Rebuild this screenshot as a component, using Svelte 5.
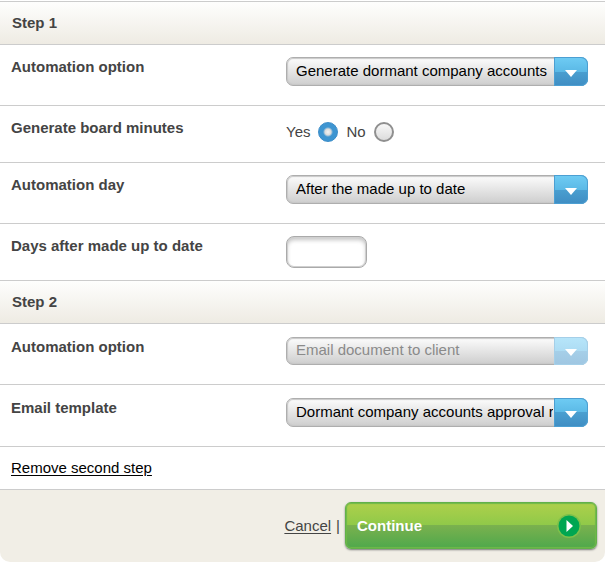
<script>
  let firstOption = $state('Generate dormant company accounts');
  let minutes = $state('yes');
  let day = $state('After the made up to date');
  let days = $state('');
  let secondOption = $state('Email document to client');
  let template = $state('Dormant company accounts approval required');
  let hasSecondStep = $state(true);
</script>

{#snippet arrow()}
  <span class="arrow" aria-hidden="true">
    <svg width="12" height="8" viewBox="0 0 12 8">
      <path d="M0 1h12L6 8z" fill="#fff" />
    </svg>
  </span>
{/snippet}

<form onsubmit={(e) => e.preventDefault()}>
  <section>
    <h2>Step 1</h2>
    <div class="row">
      <label class="name" for="option-1">Automation option</label>
      <div class="select">
        <select id="option-1" bind:value={firstOption}>
          <option>Generate dormant company accounts</option>
          <option>Email document to client</option>
        </select>
        {@render arrow()}
      </div>
    </div>
    <div class="row compact" role="radiogroup" aria-labelledby="minutes-name">
      <span class="name" id="minutes-name">Generate board minutes</span>
      <div class="radios">
        <label>Yes <input type="radio" name="minutes" value="yes" bind:group={minutes} /></label>
        <label>No <input type="radio" name="minutes" value="no" bind:group={minutes} /></label>
      </div>
    </div>
    <div class="row">
      <label class="name" for="day">Automation day</label>
      <div class="select">
        <select id="day" bind:value={day}>
          <option>After the made up to date</option>
          <option>On the made up to date</option>
        </select>
        {@render arrow()}
      </div>
    </div>
    <div class="row compact">
      <label class="name" for="days">Days after made up to date</label>
      <input id="days" class="number" type="text" inputmode="numeric" bind:value={days} />
    </div>
  </section>

  {#if hasSecondStep}
    <section class="second">
      <h2>Step 2</h2>
      <div class="row">
        <label class="name" for="option-2">Automation option</label>
        <div class="select">
          <select id="option-2" bind:value={secondOption} disabled>
            <option>Email document to client</option>
          </select>
          {@render arrow()}
        </div>
      </div>
      <div class="row tall">
        <label class="name" for="template">Email template</label>
        <div class="select">
          <select id="template" bind:value={template}>
            <option>Dormant company accounts approval required</option>
          </select>
          {@render arrow()}
        </div>
      </div>
      <div class="remove">
        <a href="#remove" onclick={() => (hasSecondStep = false)}>Remove second step</a>
      </div>
    </section>
  {/if}

  <footer>
    <a href="#cancel">Cancel</a>
    <span class="bar">|</span>
    <button type="submit">
      Continue
      <svg width="24" height="24" viewBox="0 0 24 24" aria-hidden="true">
        <circle cx="12" cy="12" r="12" fill="#7cc04b" />
        <circle cx="12" cy="12" r="10.5" fill="#00a651" />
        <path d="M9.500 6v12l6.500-6z" fill="#fff" />
      </svg>
    </button>
  </footer>
</form>

<style>
  :global(body) {
    margin: 0;
    background: #fff;
  }

  form {
    padding-top: 1px;
    font: 15px/18px Arial, "Liberation Sans", sans-serif;
    color: #444;
  }

  section:first-child {
    border-top: 1px solid #ccc;
  }

  h2 {
    margin: 0;
    padding: 12px;
    border-bottom: 1px solid #ccc;
    background: linear-gradient(#fefefd, #eeebe3);
    font-size: 15px;
    line-height: 18px;
  }

  .row {
    display: grid;
    grid-template-columns: 275px minmax(0, 1fr);
    align-items: start;
    box-sizing: border-box;
    min-height: 61px;
    padding: 12px 17px 12px 11px;
    border-bottom: 1px solid #ccc;
  }

  .compact {
    min-height: 57px;
  }

  .tall {
    min-height: 62px;
  }

  .second .row {
    padding-top: 13px;
  }

  .name {
    padding-top: 1px;
    font-weight: bold;
  }

  .select {
    position: relative;
    max-width: 302px;
  }

  select {
    display: block;
    appearance: none;
    box-sizing: border-box;
    width: 100%;
    height: 29px;
    margin: 0;
    padding: 0 34px 2px 9px;
    border: 1px solid #aeaeae;
    border-radius: 7px;
    outline-offset: 2px;
    background: linear-gradient(#fcfcfc, #cecece);
    box-shadow: inset 0 0 1px 1px #c8c8c8;
    font: inherit;
    color: #000;
    opacity: 1;
  }

  select:disabled {
    height: 28px;
    color: #8a8a8a;
  }

  .arrow {
    position: absolute;
    top: 0;
    right: 0;
    bottom: 0;
    display: flex;
    align-items: center;
    justify-content: center;
    box-sizing: border-box;
    width: 34px;
    padding-top: 2px;
    border-radius: 0 7px 7px 0;
    background: linear-gradient(#6fccf4, #5bb9e6 50%, #4a9fd0 50%, #3f8dc3);
    box-shadow: inset 0 0 0 1px #4c9fd2;
    pointer-events: none;
  }

  select:disabled + .arrow {
    background: linear-gradient(#b7e6fa, #addcf3 50%, #a5cfe8 50%, #9fc6e1);
    box-shadow: inset 0 0 0 1px #a5cfe8;
  }

  .radios {
    display: flex;
    gap: 8px;
    padding-top: 4px;
  }

  .radios label {
    display: flex;
    align-items: center;
    gap: 8px;
  }

  .radios input {
    appearance: none;
    box-sizing: border-box;
    width: 20px;
    height: 20px;
    margin: 0;
    border: 2px solid #8f8f8f;
    border-radius: 50%;
    background: linear-gradient(#f8f8f8, #dcdcdc);
  }

  .radios input:checked {
    border: 1px solid #3a8cc8;
    background: radial-gradient(circle, #f4f4f4 0, #dcdcdc 3px, #3e95d1 5px);
  }

  .number {
    box-sizing: border-box;
    width: 81px;
    height: 32px;
    margin: 0;
    padding: 0 8px;
    border: 1px solid #aaa;
    border-radius: 8px;
    background: #fff;
    box-shadow: inset 0 0 0 1px #d0d0d0, inset 0 3px 4px #c4c4c4;
    font: inherit;
    color: #000;
  }

  .remove {
    padding: 12px 11px;
    border-bottom: 1px solid #ccc;
  }

  a {
    color: inherit;
    text-underline-offset: 2px;
  }

  .remove a {
    color: #000;
  }

  footer {
    display: flex;
    align-items: center;
    justify-content: flex-end;
    gap: 5px;
    padding: 12px 8px 13px;
    border-radius: 0 0 10px 10px;
    background: #f1eee6;
  }

  button {
    display: flex;
    align-items: center;
    justify-content: space-between;
    box-sizing: border-box;
    width: 252px;
    height: 47px;
    margin: 0;
    padding: 0 15px 0 11px;
    border: 1px solid #62b14a;
    border-radius: 6px;
    background: linear-gradient(#aed04b, #8fc949 50%, #7ab14e 50%, #4fa84c);
    box-shadow: inset 0 0 1px 1px #6fb84a, 0 1px 2px #777;
    font: bold 15px/18px Arial, "Liberation Sans", sans-serif;
    color: #fff;
  }
</style>
